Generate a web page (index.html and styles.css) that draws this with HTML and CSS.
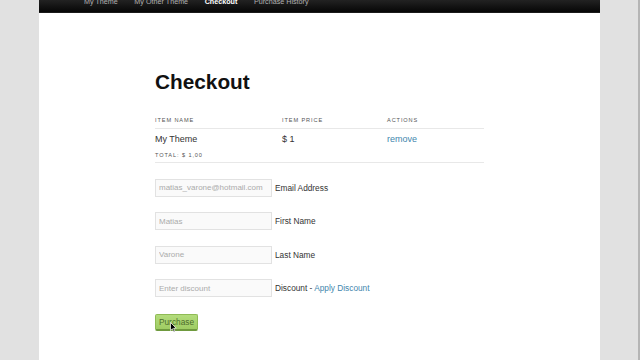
FILE: index.html
```html
<!DOCTYPE html>
<html lang="en">
<head>
<meta charset="utf-8">
<title>Checkout</title>
<link rel="stylesheet" href="styles.css">
</head>
<body>
<div class="page">
  <nav class="nav">
    <a class="nav-item" href="#">My Theme</a>
    <a class="nav-item" href="#">My Other Theme</a>
    <a class="nav-item active" href="#">Checkout</a>
    <a class="nav-item" href="#">Purchase History</a>
  </nav>
  <main class="main">
    <h1 class="title">Checkout</h1>
    <div class="cart">
      <div class="cart-head">
        <span>Item Name</span>
        <span>Item Price</span>
        <span>Actions</span>
      </div>
      <div class="cart-row">
        <span>My Theme</span>
        <span>$ 1</span>
        <a class="link" href="#">remove</a>
      </div>
      <div class="cart-total">Total: $ 1,00</div>
    </div>
    <form class="form">
      <div class="field">
        <input class="input" type="text" placeholder="matias_varone@hotmail.com">
        <label class="label">Email Address</label>
      </div>
      <div class="field">
        <input class="input" type="text" placeholder="Matias">
        <label class="label">First Name</label>
      </div>
      <div class="field">
        <input class="input" type="text" placeholder="Varone">
        <label class="label">Last Name</label>
      </div>
      <div class="field">
        <input class="input" type="text" placeholder="Enter discount">
        <label class="label">Discount - <a class="link" href="#">Apply Discount</a></label>
      </div>
      <div class="actions">
        <button class="btn" type="button">Purchase</button>
        <svg class="cursor" width="7" height="11" viewBox="0 0 7 11"><path d="M0.5 0.5 L0.5 8.5 L2.4 6.8 L3.8 10 L5 9.4 L3.6 6.3 L6.2 6.2 Z" fill="#000" stroke="#fff" stroke-width="0.7"/></svg>
      </div>
    </form>
  </main>
</div>
</body>
</html>
```
FILE: styles.css
```css
html, body {
  margin: 0;
  padding: 0;
}
body {
  background: #e1e1e1;
  font-family: "Liberation Sans", Arial, Helvetica, sans-serif;
  color: #222;
  height: 360px;
  overflow: hidden;
  border-right: 2px solid #b5b5b5;
  box-sizing: border-box;
}
.page {
  margin-left: 39px;
  width: 561px;
  height: 360px;
  background: #fff;
}
.nav {
  height: 12px;
  background: linear-gradient(#222, #060606);
  display: flex;
  gap: 16.5px;
  padding-left: 45px;
  overflow: hidden;
  border-bottom: 1px solid #1a1a1a;
}
.nav-item {
  font-size: 7.2px;
  line-height: 8px;
  margin-top: -2.5px;
  color: #b0b0b0;
  text-decoration: none;
}
.nav-item.active {
  color: #fff;
  font-weight: bold;
}
.main {
  padding: 58px 0 0 116px;
}
.title {
  margin: 0;
  font-size: 20.8px;
  line-height: 21px;
  font-weight: bold;
  color: #111;
}
.cart {
  width: 329px;
  margin-top: 24px;
}
.cart-head, .cart-row {
  display: grid;
  grid-template-columns: 127px 105px 97px;
}
.cart-head {
  font-size: 5.6px;
  line-height: 8px;
  letter-spacing: 0.9px;
  text-transform: uppercase;
  color: #555;
  padding-bottom: 4px;
  border-bottom: 1px solid #e8e8e8;
}
.cart-row {
  font-size: 9px;
  line-height: 11px;
  padding-top: 5px;
  color: #333;
}
.cart-total {
  font-size: 5.6px;
  line-height: 8px;
  letter-spacing: 0.9px;
  text-transform: uppercase;
  color: #555;
  padding-top: 6px;
  padding-bottom: 2.5px;
  border-bottom: 1px solid #e8e8e8;
}
.link {
  color: #3f86ad;
  text-decoration: none;
}
.form {
  margin-top: 16px;
  display: flex;
  flex-direction: column;
  gap: 15.5px;
}
.field {
  display: flex;
  align-items: center;
  gap: 3px;
}
.input {
  box-sizing: border-box;
  width: 117px;
  height: 18px;
  margin: 0;
  padding: 0 3px;
  border: 1px solid #e2e2e2;
  background: #fafafa;
  font-family: inherit;
  font-size: 8px;
  color: #999;
  outline: none;
}
.input::placeholder {
  color: #ababab;
}
.label {
  font-size: 8.3px;
  color: #333;
}
.actions {
  position: relative;
  margin-top: -2px;
}
.btn {
  box-sizing: border-box;
  width: 43px;
  height: 17px;
  margin: 0;
  padding: 0;
  font-family: inherit;
  font-size: 8.3px;
  color: #4d6e2c;
  background: linear-gradient(#b3dc7c, #9fcc63);
  border: 1px solid #8fbb55;
  border-bottom: 2px solid #6f9a3e;
  border-radius: 2px;
}
.cursor {
  position: absolute;
  left: 15px;
  top: 11px;
}
```
